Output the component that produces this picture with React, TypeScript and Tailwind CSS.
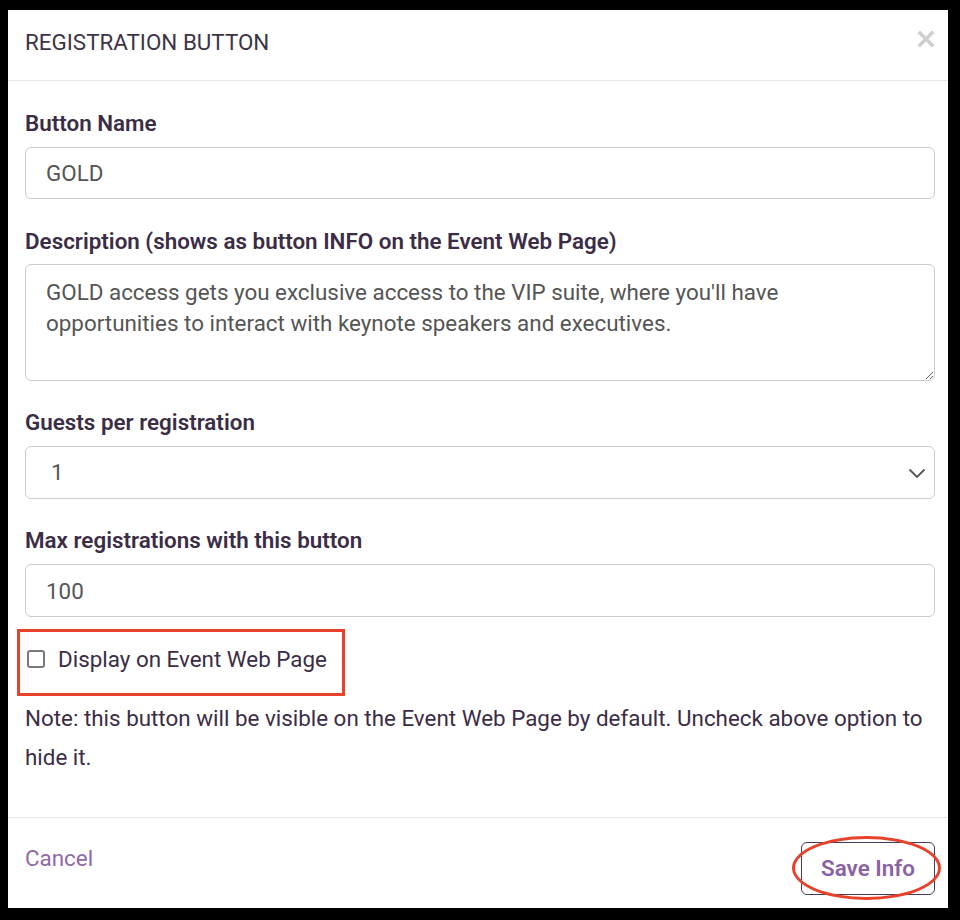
import React from 'react';

const labelCls = 'block text-[22.4px] leading-[24px] font-semibold text-[#3b2d45]';
const fieldCls =
  'w-full border border-[#cccccc] rounded-[6px] bg-white text-[22.4px] text-[#555555] outline-none';

export default function App() {
  return (
    <div className="w-[960px] h-[920px] bg-black pt-[10px] pl-[8px]" style={{ fontFamily: 'Roboto, "Liberation Sans", sans-serif' }}>
      <div className="relative w-[940px] h-[898px] bg-white flex flex-col">
        {/* header */}
        <div className="h-[71px] flex items-center justify-between pl-[17px] pr-[9px] border-b border-[#e5e5e5] shrink-0">
          <h2 className="text-[22.4px] leading-[24px] font-normal text-[#3d3546] -mt-[7px]">REGISTRATION BUTTON</h2>
          <button className="-mt-[12px] p-1">
            <svg width="18" height="18" viewBox="0 0 18 18">
              <path d="M3 3 L15 15 M15 3 L3 15" stroke="#cfcfcf" strokeWidth="3.6" strokeLinecap="square" />
            </svg>
          </button>
        </div>

        {/* body */}
        <div className="flex-1 pl-[17px] pr-[13px] pt-[30px]">
          <label className={labelCls}>Button Name</label>
          <input
            readOnly
            value="GOLD"
            className={`${fieldCls} mt-[12px] h-[52px] px-[20px]`}
          />

          <label className={`${labelCls} mt-[30px]`}>Description (shows as button INFO on the Event Web Page)</label>
          <textarea
            readOnly
            value="GOLD access gets you exclusive access to the VIP suite, where you'll have opportunities to interact with keynote speakers and executives."
            className={`${fieldCls} block mt-[11px] h-[117px] pl-[20px] pt-[12px] leading-[31px] pr-[100px]`}
          />

          <label className={`${labelCls} mt-[29px]`}>Guests per registration</label>
          <div className={`${fieldCls} mt-[12px] h-[53px] pl-[25px] pr-[8px] flex items-center justify-between`}>
            <span>1</span>
            <svg width="18" height="12" viewBox="0 0 18 12">
              <path d="M1.5 2.5 L9 10 L16.5 2.5" fill="none" stroke="#555" strokeWidth="1.8" />
            </svg>
          </div>

          <label className={`${labelCls} mt-[29px]`}>Max registrations with this button</label>
          <input
            readOnly
            value="100"
            className={`${fieldCls} mt-[12px] h-[53px] px-[20px]`}
          />

          <div className="mt-[30px] h-[24px] flex items-center gap-[13px] pl-[2px]">
            <span className="w-[18px] h-[18px] rounded-[3px] border-2 border-[#7a7a7a] bg-white" />
            <span className="text-[22.4px] leading-[24px] text-[#3b2d45]">Display on Event Web Page</span>
          </div>

          <p className="mt-[28px] text-[22.4px] leading-[39px] text-[#3b2d45]">
            Note: this button will be visible on the Event Web Page by default. Uncheck above option to hide it.
          </p>
        </div>

        {/* footer */}
        <div className="h-[91px] shrink-0 border-t border-[#e5e5e5] flex items-start justify-between pl-[17px] pr-[13px]">
          <button className="mt-[28px] text-[22.4px] leading-[24px] text-[#8e6aa8]">Cancel</button>
          <button className="mt-[24px] w-[134px] h-[53px] rounded-[6px] border border-[#4a3a5c] text-[22.4px] font-semibold text-[#8a62a4]">
            Save Info
          </button>
        </div>

        {/* annotations */}
        <div className="absolute left-[9px] top-[619px] w-[328px] h-[67px] border-[3px] border-[#e8432a]" />
        <div className="absolute left-[784px] top-[826px] w-[149px] h-[64px] rounded-[50%] border-[3px] border-[#e8432a]" />
      </div>
    </div>
  );
}
